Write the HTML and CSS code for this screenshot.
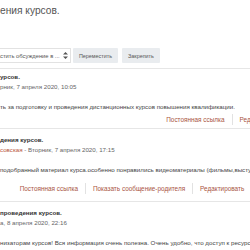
FILE: index.html
```html
<!DOCTYPE html>
<html lang="ru">
<head>
    <meta charset="UTF-8">
    <meta name="viewport" content="width=device-width, initial-scale=1.0">
    <title>Обсуждение</title>
    <link rel="stylesheet" href="styles.css">
</head>
<body>

    <div class="discussion">
        <h2 class="discussion-title">ения курсов.</h2>

        <div class="discussion-controls">
            <div class="move-select">
                <span class="select-text">стить обсуждение в ...</span>
                <svg class="select-arrows" width="5" height="7" viewBox="0 0 5 7">
                    <path d="M2.5 0 L5 2.6 L0 2.6 Z M2.5 7 L5 4.4 L0 4.4 Z" fill="#555"/>
                </svg>
            </div>
            <button class="btn-light">Переместить</button>
            <button class="btn-light">Закрепить</button>
        </div>

        <!-- Post 1 -->
        <div class="forumpost first">
            <div class="post-subject">урсов.</div>
            <div class="post-author">рник, 7 апреля 2020, 10:05</div>
            <div class="post-content">ть за подготовку и проведения дистанционных курсов повышения квалификации.</div>
            <div class="post-commands">
                <a href="#">Постоянная ссылка</a>
                <a href="#">Редактировать</a>
                <a href="#">Ответить</a>
            </div>
        </div>

        <!-- Post 2 -->
        <div class="forumpost">
            <div class="post-subject">дения курсов.</div>
            <div class="post-author"><a href="#">совская</a> - Вторник, 7 апреля 2020, 17:15</div>
            <div class="post-content long">подобранный материал курса.особенно понравились видеоматериалы (фильмы,выступления экспертов).</div>
            <div class="post-commands">
                <a href="#">Постоянная ссылка</a>
                <a href="#">Показать сообщение-родителя</a>
                <a href="#">Редактировать</a>
                <a href="#">Удалить</a>
                <a href="#">Ответить</a>
            </div>
        </div>

        <!-- Post 3 -->
        <div class="forumpost">
            <div class="post-subject">проведения курсов.</div>
            <div class="post-author">а, 8 апреля 2020, 22:16</div>
            <div class="post-content">низаторам курсов! Вся информация очень полезна. Очень удобно, что доступ к ресурсам курса открыт.</div>
        </div>
    </div>

</body>
</html>
```

FILE: styles.css
```css
html, body {
    overflow: hidden;
}

body {
    font-family: "Liberation Sans", Arial, sans-serif;
    background-color: #fff;
    color: #373a3c;
    margin: 0;
}

.discussion {
    width: 326px;
    font-size: 6.2px;
}

.discussion-title {
    font-size: 10.2px;
    font-weight: normal;
    color: #555;
    line-height: 14px;
    margin: 4px 0 0 0;
}

.discussion-controls {
    display: flex;
    gap: 2px;
    margin-top: 30px;
    padding-bottom: 5px;
    border-bottom: 1px solid #e6e6e6;
}

.move-select {
    display: flex;
    align-items: center;
    justify-content: space-between;
    gap: 2px;
    width: 71px;
    height: 15px;
    padding-right: 2px;
    box-sizing: border-box;
    border: 1px solid #e2e2e2;
    border-left: none;
    color: #555;
    font-size: 5.8px;
}

.select-text {
    white-space: nowrap;
}

.select-arrows {
    flex-shrink: 0;
}

.btn-light {
    height: 15px;
    padding: 0 6px;
    border: none;
    border-radius: 1px;
    background-color: #e9ecef;
    color: #555;
    font-family: inherit;
    font-size: 5.4px;
}

.btn-light + .btn-light {
    margin-left: 2px;
}

.forumpost {
    padding: 6px 0 7px 0;
    border-bottom: 1px solid #e6e6e6;
    line-height: 10px;
}

.forumpost.first {
    padding-top: 3px;
    padding-bottom: 3px;
}

.post-subject {
    font-weight: bold;
    color: #333;
}

.post-author {
    color: #666;
}

.post-author a {
    color: #b8543c;
    text-decoration: none;
}

.post-content {
    margin-top: 10px;
    white-space: nowrap;
    color: #444;
}

.post-content.long {
    margin-bottom: 7px;
}

.post-commands {
    display: flex;
    justify-content: flex-end;
    align-items: center;
    margin-top: 1px;
    height: 12px;
    font-size: 6.4px;
}

.post-commands a {
    flex-shrink: 0;
    white-space: nowrap;
    color: #a9553f;
    text-decoration: none;
    padding: 0 7px;
    line-height: 11px;
    border-left: 1px solid #e2e2e2;
}

.post-commands a:first-child {
    border-left: none;
}

.post-commands a:last-child {
    padding-right: 0;
}
```
